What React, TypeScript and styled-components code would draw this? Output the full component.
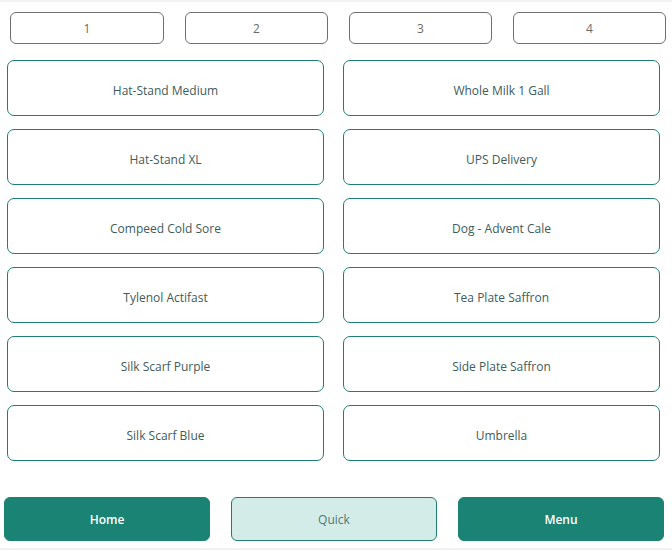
import React from 'react';
import styled, { createGlobalStyle } from 'styled-components';

const GlobalStyle = createGlobalStyle`
  html, body {
    margin: 0;
    padding: 0;
    background: #ffffff;
  }
  body {
    font-family: 'Open Sans', 'Noto Sans', sans-serif;
  }
  * {
    box-sizing: border-box;
  }
`;

const Screen = styled.div`
  width: 672px;
  height: 550px;
  border-top: 2px solid #f2f2f2;
  border-bottom: 2px solid #f2f2f2;
  display: flex;
  flex-direction: column;
`;

const NumberRow = styled.div`
  display: grid;
  grid-template-columns: 154px 143px 143px 153px;
  justify-content: space-between;
  padding: 10px 6px 0 10px;
`;

const NumberButton = styled.button`
  height: 32px;
  border: 1px solid #707070;
  border-radius: 6px;
  background: #ffffff;
  color: #6a6a6a;
  font-family: inherit;
  font-size: 12px;
  padding: 1px 0 0;
`;

const ItemGrid = styled.div`
  display: grid;
  grid-template-columns: 317px 317px;
  grid-auto-rows: 55.5px;
  column-gap: 19px;
  row-gap: 13.5px;
  padding: 16px 0 0 7px;
`;

const ItemButton = styled.button`
  border: 1px solid #1f7e71;
  border-radius: 7px;
  background: #ffffff;
  color: #405c5b;
  font-family: inherit;
  font-size: 12px;
  padding: 5px 0 0;
`;

const Footer = styled.div`
  display: grid;
  grid-template-columns: repeat(3, 206px);
  column-gap: 21px;
  padding: 36px 0 0 4px;
`;

const FooterButton = styled.button<{ $active?: boolean }>`
  height: 44px;
  border-radius: 6px;
  border: 1px solid ${p => (p.$active ? '#1f7e71' : '#1b8373')};
  background: ${p => (p.$active ? '#d3ece8' : '#1b8373')};
  color: ${p => (p.$active ? '#4f7a74' : '#ffffff')};
  font-family: inherit;
  font-size: 12px;
  font-weight: ${p => (p.$active ? 400 : 600)};
  padding: 2px 0 0;
`;

const numbers = ['1', '2', '3', '4'];

const items = [
  'Hat-Stand Medium',
  'Whole Milk 1 Gall',
  'Hat-Stand XL',
  'UPS Delivery',
  'Compeed Cold Sore',
  'Dog - Advent Cale',
  'Tylenol Actifast',
  'Tea Plate Saffron',
  'Silk Scarf Purple',
  'Side Plate Saffron',
  'Silk Scarf Blue',
  'Umbrella',
];

export default function App() {
  return (
    <>
      <GlobalStyle />
      <Screen>
        <NumberRow>
          {numbers.map(n => (
            <NumberButton key={n}>{n}</NumberButton>
          ))}
        </NumberRow>
        <ItemGrid>
          {items.map(label => (
            <ItemButton key={label}>{label}</ItemButton>
          ))}
        </ItemGrid>
        <Footer>
          <FooterButton>Home</FooterButton>
          <FooterButton $active>Quick</FooterButton>
          <FooterButton>Menu</FooterButton>
        </Footer>
      </Screen>
    </>
  );
}
